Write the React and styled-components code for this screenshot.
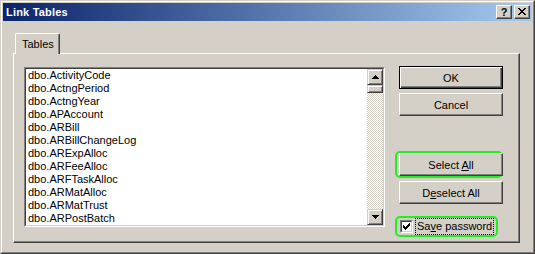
import React from 'react';
import styled, { createGlobalStyle } from 'styled-components';

const Global = createGlobalStyle`
  html, body { margin: 0; padding: 0; background: #d4d0c8; }
  body { font-family: "Liberation Sans", Arial, sans-serif; font-size: 11px; color: #000; }
  * { box-sizing: border-box; }
`;

const Window = styled.div`
  width: 535px;
  height: 254px;
  background: #d4d0c8;
  border-top: 1px solid #d4d0c8;
  border-left: 1px solid #d4d0c8;
  border-right: 1px solid #404040;
  border-bottom: 1px solid #404040;
  display: flex;
  flex-direction: column;
`;

const Frame = styled.div`
  flex: 1;
  display: flex;
  flex-direction: column;
  border-top: 1px solid #fff;
  border-left: 1px solid #fff;
  border-right: 1px solid #808080;
  border-bottom: 1px solid #808080;
  padding: 1px;
`;

const TitleBar = styled.div`
  height: 18px;
  display: flex;
  align-items: center;
  padding: 0 2px 0 2px;
  background: linear-gradient(to right, #0a246a, #a6caf0);
`;

const TitleText = styled.div`
  flex: 1;
  color: #fff;
  font-weight: bold;
  font-size: 11px;
  line-height: 18px;
  padding-left: 1px;
  letter-spacing: 0.2px;
`;

const TitleButton = styled.div`
  width: 16px;
  height: 14px;
  background: #d4d0c8;
  border-top: 1px solid #fff;
  border-left: 1px solid #fff;
  border-right: 1px solid #404040;
  border-bottom: 1px solid #404040;
  box-shadow: inset -1px -1px #808080;
  display: flex;
  align-items: center;
  justify-content: center;
  margin-left: ${(p) => p.$gap || 0}px;
  font-weight: bold;
  font-size: 11px;
  line-height: 12px;
  padding-bottom: 1px;
`;

const Body = styled.div`
  flex: 1;
  display: flex;
  flex-direction: column;
  padding: 12px 12px 8px 10px;
`;

const Tab = styled.div`
  align-self: flex-start;
  position: relative;
  z-index: 1;
  margin-left: 2px;
  margin-bottom: -1px;
  height: 21px;
  padding: 1px 5px 0 6px;
  line-height: 18px;
  background: #d4d0c8;
  border-top: 1px solid #fff;
  border-left: 1px solid #fff;
  border-right: 1px solid #404040;
  border-radius: 2px 2px 0 0;
  box-shadow: inset -1px 0 #808080;
`;

const Panel = styled.div`
  flex: 1;
  display: flex;
  align-items: flex-start;
  gap: 14px;
  padding: 13px 0 0 10px;
  border-top: 1px solid #fff;
  border-left: 1px solid #fff;
  border-right: 1px solid #404040;
  border-bottom: 1px solid #404040;
  box-shadow: inset -1px -1px #808080;
`;

const ListOuter = styled.div`
  width: 361px;
  height: 160px;
  border-top: 1px solid #808080;
  border-left: 1px solid #808080;
  border-right: 1px solid #fff;
  border-bottom: 1px solid #fff;
`;

const ListInner = styled.div`
  height: 100%;
  display: flex;
  border-top: 1px solid #404040;
  border-left: 1px solid #404040;
  border-right: 1px solid #d4d0c8;
  border-bottom: 1px solid #d4d0c8;
`;

const Items = styled.div`
  flex: 1;
  background: #fff;
  padding-left: 2px;
  overflow: hidden;
`;

const Item = styled.div`
  height: 13px;
  line-height: 13px;
  white-space: nowrap;
`;

const Scrollbar = styled.div`
  width: 16px;
  display: flex;
  flex-direction: column;
`;

const raised = `
  background: #d4d0c8;
  border-top: 1px solid #d4d0c8;
  border-left: 1px solid #d4d0c8;
  border-right: 1px solid #404040;
  border-bottom: 1px solid #404040;
  box-shadow: inset 1px 1px #fff, inset -1px -1px #808080;
`;

const ArrowButton = styled.div`
  ${raised}
  width: 16px;
  height: 16px;
  display: flex;
  align-items: center;
  justify-content: center;
`;

const Thumb = styled.div`
  ${raised}
  width: 16px;
  height: 8px;
`;

const Track = styled.div`
  flex: 1;
  background-image: conic-gradient(#fff 25%, #d4d0c8 0 50%, #fff 0 75%, #d4d0c8 0);
  background-size: 2px 2px;
`;

const Column = styled.div`
  width: 104px;
  margin-top: -1px;
  display: flex;
  flex-direction: column;
`;

const Button = styled.button`
  width: 104px;
  height: 23px;
  padding: 0;
  margin: 0;
  margin-top: ${(p) => p.$mt || 0}px;
  font-family: "Liberation Sans", Arial, sans-serif;
  font-size: 11px;
  color: #000;
  background: #d4d0c8;
  border-top: 1px solid ${(p) => (p.$default ? '#000' : '#fff')};
  border-left: 1px solid ${(p) => (p.$default ? '#000' : '#fff')};
  border-right: 1px solid #${(p) => (p.$default ? '000' : '404040')};
  border-bottom: 1px solid #${(p) => (p.$default ? '000' : '404040')};
  box-shadow: ${(p) =>
    p.$default
      ? 'inset 1px 1px #fff, inset -1px -1px #404040, inset -2px -2px #808080'
      : 'inset -1px -1px #808080'};
  u { text-decoration: underline; }
`;

const Highlight = styled.div`
  margin-top: ${(p) => p.$mt || 0}px;
  margin-left: -4px;
  border: 2px solid #22ee22;
  border-radius: 5px;
  padding: 0 2px;
`;

const SaveRow = styled.div`
  margin-top: 12px;
  margin-left: -4px;
  width: 103px;
  height: 21px;
  display: flex;
  align-items: center;
  gap: 2px;
  border: 2px solid #22ee22;
  border-radius: 5px;
  padding: 0 3px;
`;

const CheckOuter = styled.div`
  width: 13px;
  height: 13px;
  flex: none;
  border-top: 1px solid #808080;
  border-left: 1px solid #808080;
  border-right: 1px solid #fff;
  border-bottom: 1px solid #fff;
`;

const CheckInner = styled.div`
  width: 100%;
  height: 100%;
  background: #fff;
  border-top: 1px solid #404040;
  border-left: 1px solid #404040;
  border-right: 1px solid #d4d0c8;
  border-bottom: 1px solid #d4d0c8;
  display: flex;
  align-items: center;
  justify-content: center;
`;

const FocusLabel = styled.span`
  border: 1px dotted #000;
  padding: 0 1px;
  height: 17px;
  line-height: 15px;
  white-space: nowrap;
`;

const items = [
  'dbo.ActivityCode',
  'dbo.ActngPeriod',
  'dbo.ActngYear',
  'dbo.APAccount',
  'dbo.ARBill',
  'dbo.ARBillChangeLog',
  'dbo.ARExpAlloc',
  'dbo.ARFeeAlloc',
  'dbo.ARFTaskAlloc',
  'dbo.ARMatAlloc',
  'dbo.ARMatTrust',
  'dbo.ARPostBatch',
];

const closePattern = [
  'XX....XX',
  '.XX..XX.',
  '..XXXX..',
  '...XX...',
  '..XXXX..',
  '.XX..XX.',
  'XX....XX',
];

const CloseIcon = () => (
  <svg width="8" height="7" viewBox="0 0 8 7" shapeRendering="crispEdges">
    {closePattern.flatMap((row, y) =>
      row.split('').map((c, x) => (c === 'X' ? <rect key={`${x}-${y}`} x={x} y={y} width="1" height="1" fill="#000" /> : null))
    )}
  </svg>
);

const ArrowUp = () => (
  <svg width="7" height="4" viewBox="0 0 7 4" shapeRendering="crispEdges">
    <rect x="3" y="0" width="1" height="1" fill="#000" />
    <rect x="2" y="1" width="3" height="1" fill="#000" />
    <rect x="1" y="2" width="5" height="1" fill="#000" />
    <rect x="0" y="3" width="7" height="1" fill="#000" />
  </svg>
);

const ArrowDown = () => (
  <svg width="7" height="4" viewBox="0 0 7 4" shapeRendering="crispEdges">
    <rect x="0" y="0" width="7" height="1" fill="#000" />
    <rect x="1" y="1" width="5" height="1" fill="#000" />
    <rect x="2" y="2" width="3" height="1" fill="#000" />
    <rect x="3" y="3" width="1" height="1" fill="#000" />
  </svg>
);

const CheckMark = () => (
  <svg width="7" height="7" viewBox="0 0 7 7" shapeRendering="crispEdges">
    {['......X', '.....XX', 'X...XXX', 'XX.XXX.', 'XXXXX..', '.XXX...', '..X....'].flatMap((row, y) =>
      row.split('').map((c, x) => (c === 'X' ? <rect key={`${x}-${y}`} x={x} y={y} width="1" height="1" fill="#000" /> : null))
    )}
  </svg>
);

export default function App() {
  return (
    <>
      <Global />
      <Window>
        <Frame>
          <TitleBar>
            <TitleText>Link Tables</TitleText>
            <TitleButton>?</TitleButton>
            <TitleButton $gap={2}>
              <CloseIcon />
            </TitleButton>
          </TitleBar>
          <Body>
            <Tab>Tables</Tab>
            <Panel>
              <ListOuter>
                <ListInner>
                  <Items>
                    {items.map((t) => (
                      <Item key={t}>{t}</Item>
                    ))}
                  </Items>
                  <Scrollbar>
                    <ArrowButton>
                      <ArrowUp />
                    </ArrowButton>
                    <Thumb />
                    <Track />
                    <ArrowButton>
                      <ArrowDown />
                    </ArrowButton>
                  </Scrollbar>
                </ListInner>
              </ListOuter>
              <Column>
                <Button $default>OK</Button>
                <Button $mt={4}>Cancel</Button>
                <Highlight $mt={35}>
                  <Button>
                    Select <u>A</u>ll
                  </Button>
                </Highlight>
                <Button $mt={3}>
                  D<u>e</u>select All
                </Button>
                <SaveRow>
                  <CheckOuter>
                    <CheckInner>
                      <CheckMark />
                    </CheckInner>
                  </CheckOuter>
                  <FocusLabel>
                    Sa<u>v</u>e password
                  </FocusLabel>
                </SaveRow>
              </Column>
            </Panel>
          </Body>
        </Frame>
      </Window>
    </>
  );
}
